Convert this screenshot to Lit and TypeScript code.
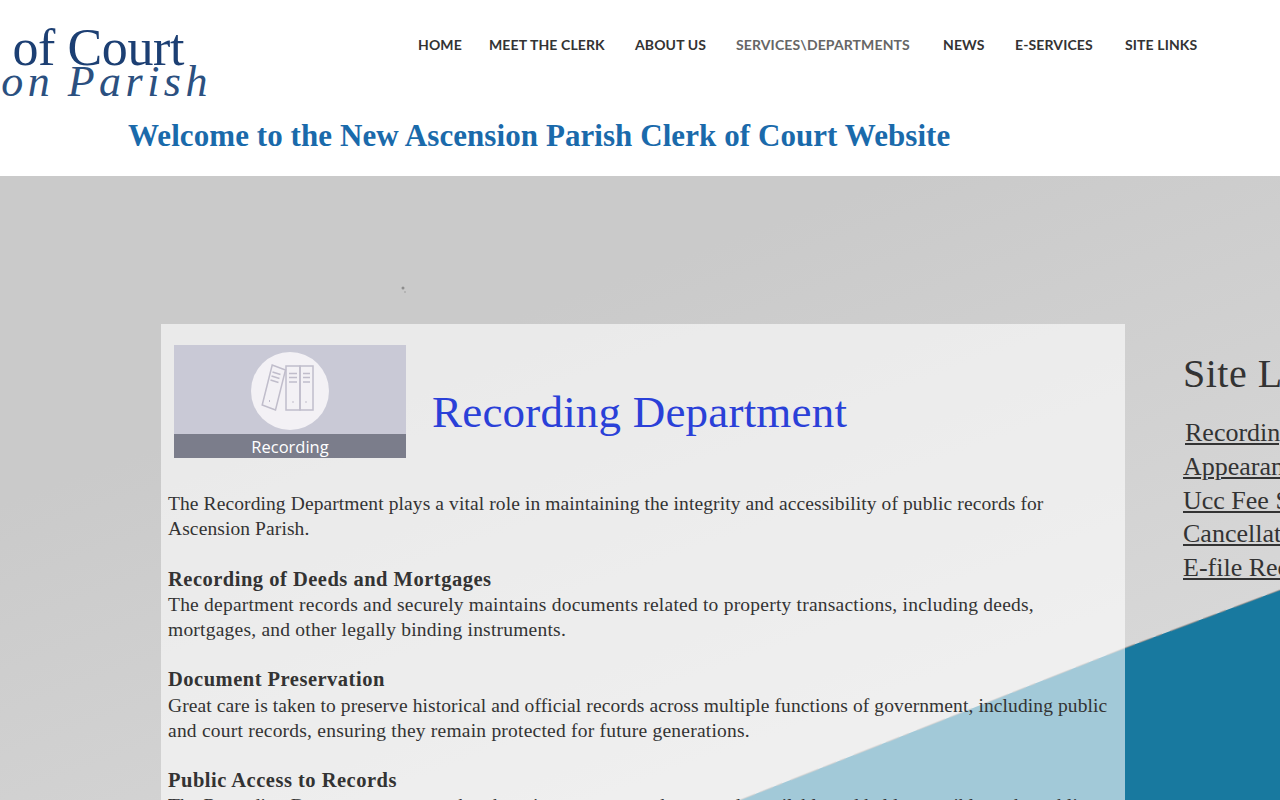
import { LitElement, html, css } from "lit";
import { customElement } from "lit/decorators.js";

const NAV: [string, number][] = [
  ["HOME", 41], ["MEET THE CLERK", 116], ["ABOUT US", 71], ["SERVICES\\DEPARTMENTS", 177],
  ["NEWS", 42], ["E-SERVICES", 80], ["SITE LINKS", 74],
];
const LINKS = ["Recording Fee Schedule", "Appearance Fees", "Ucc Fee Schedule", "Cancellation Fees", "E-file Recording"];

@customElement("app-root")
export class AppRoot extends LitElement {
  static styles = css`
    :host { display: block; width: 1280px; height: 800px; overflow: hidden; background: #fff; color: #333; font-family: "Liberation Serif", serif; }
    .header { height: 176px; display: grid; grid-template-columns: 208px 1fr; grid-template-rows: 108px 1fr; background: #fff; }
    .logo { display: flex; flex-direction: column; align-items: flex-end; overflow: hidden; padding-top: 23px; white-space: nowrap; color: #1c3f73; }
    .logo-top { font-size: 52px; line-height: 50px; margin-right: 24px; letter-spacing: -0.4px; }
    .logo-bottom { font-size: 44px; line-height: 20px; margin: -1px -4px 0 0; font-style: italic; letter-spacing: 4.500px; word-spacing: -2px; color: #2b5080; }
    .nav { display: flex; gap: 30px; padding: 36px 0 0 210px; font: 700 14px/18px "Lato", sans-serif; letter-spacing: 0.12px; color: #333; white-space: nowrap; }
    .nav .active { color: #666; }
    .welcome { grid-column: 1 / 3; margin: 0; padding-left: 128px; font-size: 31px; line-height: 56px; font-weight: 700; color: #1a6aab; letter-spacing: 0.07px; white-space: nowrap; }
    .main { position: relative; height: 624px; padding: 148px 0 0 161px; display: flex; background: linear-gradient(160deg, #cacaca 30%, #d8d8d8 85%); overflow: hidden; box-sizing: border-box; }
    .backdrop { position: absolute; left: 0; top: 0; width: 1280px; height: 624px; }
    .panel { position: relative; width: 964px; flex: none; box-sizing: border-box; height: 700px; background: rgba(255,255,255,.6); padding: 21px 7px 0; }
    .title-row { display: flex; align-items: center; gap: 26px; padding-left: 6px; margin-bottom: 33px; }
    .tile { width: 232px; height: 113px; flex: none; display: flex; flex-direction: column; background: #c9c9d6; }
    .tile-top { height: 89px; display: flex; align-items: center; justify-content: center; padding-top: 2px; box-sizing: border-box; }
    .tile-circle { width: 78px; height: 78px; border-radius: 50%; background: #f3f1f5; display: block; }
    .tile-label { height: 24px; background: #7b7d8b; color: #fff; font: 400 16.500px/25px "Open Sans", sans-serif; text-align: center; }
    h1 { margin: 20px 0 0; font-size: 45px; line-height: 50px; font-weight: 400; color: #2a40d8; letter-spacing: 0.2px; }
    .body { font-size: 19.500px; line-height: 25.200px; margin: 0; color: #333; letter-spacing: 0.1px; white-space: nowrap; }
    .body b { font-weight: 700; font-size: 20.500px; letter-spacing: 0.5px; }
    .body .wide { letter-spacing: 0.22px; }
    .side { position: relative; padding: 25px 0 0 58px; white-space: nowrap; flex: none; }
    h2 { margin: 0 0 17px; font-size: 40px; line-height: 50px; font-weight: 400; color: #333; letter-spacing: 0.5px; }
    .side a { display: block; font-size: 26px; line-height: 33.750px; color: #333; text-decoration: underline; }
    .side a:first-of-type { margin-left: 2px; }
  `;

  render() {
    return html`
      <div class="header">
        <div class="logo">
          <div class="logo-top">of Court</div>
          <div class="logo-bottom">Ascension Parish</div>
        </div>
        <nav class="nav">
          ${NAV.map(([n, w], i) => html`<span class=${i === 3 ? "active" : ""} style="width:${w}px">${n}</span>`)}
        </nav>
        <p class="welcome">Welcome to the New Ascension Parish Clerk of Court Website</p>
      </div>
      <div class="main">
        <svg class="backdrop" viewBox="0 0 1280 624" aria-hidden="true">
          <polygon points="1280,414 1280,624 740,624 1125,472" fill="#18799f" />
          <path d="M1280 414L1125 472L740 624" fill="none" stroke="#a08f88" stroke-width="1.500" stroke-dasharray="14 5 30 9 6 4" opacity=".5" />
          <circle cx="403" cy="112" r="1.500" fill="#8d8d8d" />
          <circle cx="405" cy="116" r=".8" fill="#9a9a9a" />
        </svg>
        <section class="panel">
          <div class="title-row">
            <div class="tile">
              <div class="tile-top">
                <svg class="tile-circle" viewBox="0 0 78 78" fill="none" stroke="#c0bdcb" stroke-width="1.500">
                  <polygon points="11.200,53 21.200,13 34.500,18 24.500,58" />
                  <rect x="35" y="14" width="14" height="44" />
                  <rect x="49" y="14" width="13" height="44" />
                  <path d="M21.500 20l8 2.500M20.500 24l8 2.500M19.500 28l8 2.500M38 21.500h8M38 25.500h8M38 30h8M52 21.500h7M52 25.500h7M52 30h7" />
                  <path d="M18 49h1M41.500 50h1M54.500 50h1" stroke-width="2" />
                </svg>
              </div>
              <div class="tile-label">Recording</div>
            </div>
            <h1>Recording Department</h1>
          </div>
          <p class="body">
            The Recording Department plays a vital role in maintaining the integrity and accessibility of public records for<br />
            Ascension Parish.<br /><br />
            <b>Recording of Deeds and Mortgages</b><br />
            <span class="wide">The department records and securely maintains documents related to property transactions, including deeds,</span><br />
            <span class="wide">mortgages, and other legally binding instruments.</span><br /><br />
            <b>Document Preservation</b><br />
            Great care is taken to preserve historical and official records across multiple functions of government, including public<br />
            <span class="wide">and court records, ensuring they remain protected for future generations.</span><br /><br />
            <b>Public Access to Records</b><br />
            The Recording Department ensures that these important records are made available and held accessible to the public
          </p>
        </section>
        <aside class="side">
          <h2>Site Links</h2>
          ${LINKS.map((l) => html`<a href="#">${l}</a>`)}
        </aside>
      </div>
    `;
  }
}
